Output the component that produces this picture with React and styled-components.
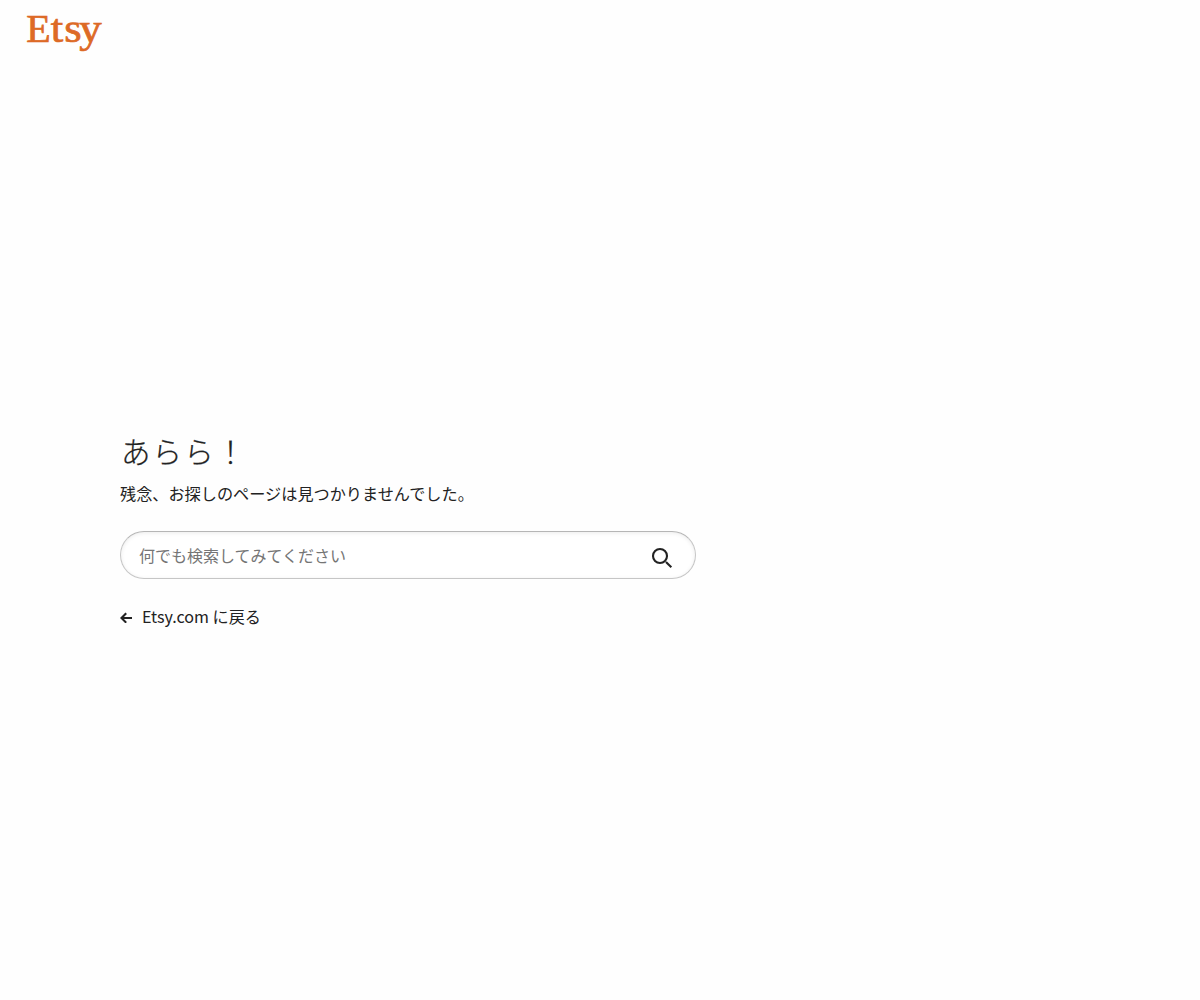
import React from "react";
import styled, { createGlobalStyle } from "styled-components";

const GlobalStyle = createGlobalStyle`
    * {
        box-sizing: border-box;
    }

    body {
        margin: 0;
        background: #fefefe;
        color: #222;
        font-family: "Noto Sans CJK JP", sans-serif;
        font-size: 16px;
        line-height: 24px;
    }
`;

const Page = styled.div`
    display: flex;
    flex-direction: column;
    height: 1000px;
`;

const Header = styled.header`
    height: 64px;
    padding-left: 26px;
`;

const Logo = styled.svg`
    display: block;
    width: 80px;
    height: 60px;
    fill: #dd6a26;
    stroke: #dd6a26;
    stroke-width: 0.7;
    font-family: "Liberation Serif", serif;
    font-size: 40px;
`;

const Main = styled.main`
    width: 576px;
    margin-top: 366px;
    margin-left: 120px;
`;

const Title = styled.h1`
    margin: 0 0 11px;
    padding-left: 1px;
    font-size: 29.5px;
    font-weight: 300;
    letter-spacing: 2.1px;
    line-height: 40px;
    -webkit-text-stroke: 0.25px #222;
`;

const Message = styled.p`
    margin: 0;
    font-size: 16.16px;
`;

const SearchForm = styled.form`
    display: flex;
    align-items: center;
    height: 48px;
    margin-top: 26px;
    padding: 0 21px 0 18px;
    border: 1px solid #c6c6c6;
    border-top-color: #b6b6b6;
    border-radius: 24px;
    background: #fff;
    box-shadow: inset 0 1px 4px rgba(0, 0, 0, 0.08);
`;

const SearchInput = styled.input`
    flex: 1;
    min-width: 0;
    padding: 0;
    border: 0;
    outline: 0;
    background: transparent;
    color: #222;
    font: inherit;

    &::placeholder {
        color: #757575;
        opacity: 1;
    }
`;

const SearchButton = styled.button`
    display: flex;
    padding: 6px 0 0;
    border: 0;
    background: none;
`;

const Icon = styled.svg`
    display: block;
    fill: none;
    stroke: #222;
    stroke-width: 2.1;
`;

const BackLink = styled.a`
    display: flex;
    align-items: center;
    gap: 9px;
    margin-top: 25px;
    color: inherit;
    font-size: 16.1px;
    text-decoration: none;
`;

const App = () => {
    return (
        <Page>
            <GlobalStyle />
            <Header>
                <Logo viewBox="0 0 80 60" role="img" aria-label="Etsy">
                    <text x="0.3" y="41.8">
                        E
                    </text>
                    <text x="22 34.2 47.6" y="41.8" transform="scale(1.12 1)">
                        tsy
                    </text>
                </Logo>
            </Header>
            <Main>
                <Title>あらら！</Title>
                <Message>残念、お探しのページは見つかりませんでした。</Message>
                <SearchForm onSubmit={(e) => e.preventDefault()}>
                    <SearchInput
                        type="text"
                        placeholder="何でも検索してみてください"
                    />
                    <SearchButton type="submit" aria-label="検索">
                        <Icon width="24" height="24" viewBox="0 0 24 24">
                            <circle cx="10" cy="10" r="7" />
                            <path d="M16 16 21.3 21.3" />
                        </Icon>
                    </SearchButton>
                </SearchForm>
                <BackLink href="#">
                    <Icon width="13" height="14" viewBox="0 0 13 14">
                        <path d="M12 9H2M6.2 4.3 1.5 9 6.2 13.7" />
                    </Icon>
                    Etsy.com に戻る
                </BackLink>
            </Main>
        </Page>
    );
};

export default App;
